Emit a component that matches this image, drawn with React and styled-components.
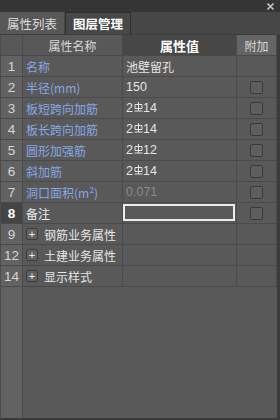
import React from 'react'
import styled, { createGlobalStyle, css } from 'styled-components'

const Global = createGlobalStyle`
    html, body {
        margin: 0;
        padding: 0;
        background: #595959;
    }
    body {
        font-family: "Noto Sans CJK SC", "Noto Sans", sans-serif;
        font-size: 12px;
    }
`

const Panel = styled.div`
    width: 280px;
    height: 420px;
    display: flex;
    flex-direction: column;
    background: #595959;
    overflow: hidden;
`

const TopStrip = styled.div`
    height: 12px;
    background: #353535;
    display: flex;
    justify-content: flex-end;
    align-items: center;
    padding-right: 6px;
`

const Close = styled.svg`
    width: 7px;
    height: 7px;
`

const TabBar = styled.div`
    height: 22px;
    display: flex;
    background: #474747;
    border-bottom: 1px solid #3e3e3e;
`

const Tab = styled.div`
    width: 64px;
    display: flex;
    align-items: center;
    justify-content: center;
    font-size: 12.5px;
    color: #dcdcdc;
    box-sizing: border-box;
    ${p =>
        p.active
            ? css`
                  background: #585858;
              `
            : css`
                  background: #484848;
                  color: #ffffff;
                  font-weight: bold;
                  border: 1px solid #2e2e2e;
                  border-bottom: none;
                  width: 66px;
                  margin-left: 1px;
              `}
`

const Body = styled.div`
    flex: 1;
    display: flex;
    flex-direction: column;
    border-right: 3px solid #3b3b3b;
    border-bottom: 2px solid #3b3b3b;
    border-left: 1px solid #4c4c4c;
`

const Grid = styled.div`
    display: grid;
    grid-template-columns: 22px 100px 114px 40px;
    grid-auto-rows: 21px;
`

const Cell = styled.div`
    box-sizing: border-box;
    border-right: 1px solid #4a4a4a;
    border-bottom: 1px solid #4a4a4a;
    display: flex;
    align-items: center;
    overflow: hidden;
    white-space: nowrap;
    color: #e2e2e2;
`

const HeadCell = styled(Cell)`
    justify-content: center;
    background: ${p => p.bg || '#585858'};
    color: ${p => p.color || '#d8d8d8'};
    font-weight: ${p => (p.bold ? 'bold' : 'normal')};
    font-size: ${p => (p.bold ? '13px' : '12px')};
`

const NumCell = styled(Cell)`
    justify-content: center;
    background: ${p => (p.current ? '#444444' : '#626262')};
    color: ${p => (p.current ? '#ffffff' : '#d6d6d6')};
    font-weight: ${p => (p.current ? 'bold' : 'normal')};
    font-family: "Liberation Sans", Arial, sans-serif;
    font-size: 13.5px;
`

const NameCell = styled(Cell)`
    padding-left: 3px;
    color: ${p => p.color || '#86a8e6'};
`

const ValueCell = styled(Cell)`
    padding-left: 3px;
    color: ${p => (p.muted ? '#8c8c8c' : '#e4e4e4')};
    font-family: "Liberation Sans", "Noto Sans CJK SC", sans-serif;
    font-size: 12.5px;
`

const CnValue = styled.span`
    font-family: "Noto Sans CJK SC", sans-serif;
    font-size: 12px;
`

const InputCell = styled(Cell)`
    padding: 1px 1px 2px 0;
`

const Input = styled.div`
    flex: 1;
    align-self: stretch;
    border: 2px solid #ececec;
`

const AddCell = styled(Cell)`
    justify-content: center;
`

const Check = styled.div`
    width: 11px;
    height: 11px;
    border: 1px solid #3a3a3a;
    border-radius: 2px;
    background: #5e5e5e;
`

const Expander = styled.div`
    width: 10px;
    height: 10px;
    border: 1px solid #3c3c3c;
    border-radius: 2px;
    background: #616161;
    color: #f0f0f0;
    display: flex;
    align-items: center;
    justify-content: center;
    font-size: 11px;
    line-height: 1;
    margin-right: 6px;
    font-family: "Liberation Sans", sans-serif;
`

const Filler = styled.div`
    flex: 1;
    display: grid;
    grid-template-columns: 22px 1fr;
`

const FillNum = styled.div`
    background: #626262;
    border-right: 1px solid #4a4a4a;
`

const RebarSym = styled.svg`
    width: 9px;
    height: 10px;
    margin: 0 0 3px 1px;
    vertical-align: middle;
`

const Rebar = ({ n, d }) => (
    <span>
        {n}
        <RebarSym viewBox="0 0 9 10">
            <path
                d="M1 2.5h7v4h-7z M4.5 0v9 M0.5 9h8"
                fill="none"
                stroke="#e4e4e4"
                strokeWidth="1"
            />
        </RebarSym>
        {d}
    </span>
)

const rows = [
    { no: 1, name: '名称', value: <CnValue>池壁留孔</CnValue>, check: false },
    { no: 2, name: '半径(mm)', value: '150', check: true },
    { no: 3, name: '板短跨向加筋', value: <Rebar n="2" d="14" />, check: true },
    { no: 4, name: '板长跨向加筋', value: <Rebar n="2" d="14" />, check: true },
    { no: 5, name: '圆形加强筋', value: <Rebar n="2" d="12" />, check: true },
    { no: 6, name: '斜加筋', value: <Rebar n="2" d="14" />, check: true },
    { no: 7, name: '洞口面积(m²)', value: '0.071', muted: true, check: true },
]

const groups = [
    { no: 9, name: '钢筋业务属性' },
    { no: 12, name: '土建业务属性' },
    { no: 14, name: '显示样式' },
]

const App = () => (
    <Panel>
        <Global />
        <TopStrip>
            <Close viewBox="0 0 7 7">
                <path d="M0.5 0.5l6 6M6.5 0.5l-6 6" stroke="#bdbdbd" strokeWidth="1.6" />
            </Close>
        </TopStrip>
        <TabBar>
            <Tab active>属性列表</Tab>
            <Tab>图层管理</Tab>
        </TabBar>
        <Body>
            <Grid>
                <HeadCell bg="#585858" />
                <HeadCell>属性名称</HeadCell>
                <HeadCell bg="#474747" color="#ffffff" bold>
                    属性值
                </HeadCell>
                <HeadCell bg="#646464">附加</HeadCell>

                {rows.map(r => (
                    <React.Fragment key={r.no}>
                        <NumCell>{r.no}</NumCell>
                        <NameCell>{r.name}</NameCell>
                        <ValueCell muted={r.muted}>{r.value}</ValueCell>
                        <AddCell>{r.check && <Check />}</AddCell>
                    </React.Fragment>
                ))}

                <NumCell current>8</NumCell>
                <NameCell color="#ececec">备注</NameCell>
                <InputCell>
                    <Input />
                </InputCell>
                <AddCell>
                    <Check />
                </AddCell>

                {groups.map(g => (
                    <React.Fragment key={g.no}>
                        <NumCell>{g.no}</NumCell>
                        <NameCell color="#e6e6e6">
                            <Expander>+</Expander>
                            {g.name}
                        </NameCell>
                        <Cell />
                        <Cell />
                    </React.Fragment>
                ))}
            </Grid>
            <Filler>
                <FillNum />
                <div />
            </Filler>
        </Body>
    </Panel>
)

export default App
